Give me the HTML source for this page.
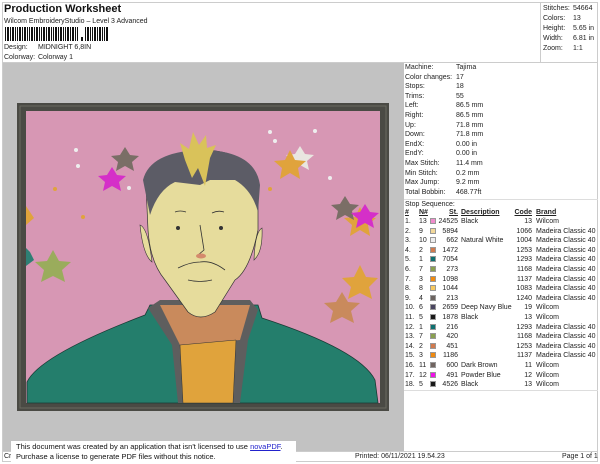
<!DOCTYPE html>
<html><head><meta charset="utf-8"><style>
*{margin:0;padding:0;box-sizing:border-box}
body{width:600px;height:464px;background:#fff;position:relative;overflow:hidden;font-family:"Liberation Sans",Arial,sans-serif;color:#222;font-size:7px}
.a{position:absolute;white-space:nowrap;line-height:9px}
.r{text-align:right}
.sw{position:absolute;width:6px;height:6px;border:1px solid #999}
</style></head><body>
<div class="a" style="left:2px;top:2px;width:596px;height:460px;border:1px solid #ccc"></div>
<div class="a" style="left:540px;top:2px;width:1px;height:60px;background:#ccc"></div>
<div class="a" style="left:2px;top:62px;width:596px;height:1px;background:#ccc"></div>
<div class="a" style="left:4px;top:3px;font-size:11px;font-weight:bold;line-height:13px;color:#111">Production Worksheet</div>
<div class="a" style="left:4px;top:17px;font-size:7px">Wilcom EmbroideryStudio – Level 3 Advanced</div>
<svg class="a" style="left:5px;top:27px" width="105" height="14">
<g fill="#111">
<rect x="0" y="0" width="1" height="14"/><rect x="2" y="0" width="2" height="14"/><rect x="5" y="0" width="1" height="14"/><rect x="7" y="0" width="2" height="14"/><rect x="10" y="0" width="1" height="14"/><rect x="12" y="0" width="1" height="14"/><rect x="14" y="0" width="2" height="14"/><rect x="17" y="0" width="1" height="14"/><rect x="19" y="0" width="2" height="14"/><rect x="22" y="0" width="1" height="14"/><rect x="24" y="0" width="1" height="14"/><rect x="26" y="0" width="2" height="14"/><rect x="29" y="0" width="1" height="14"/><rect x="31" y="0" width="2" height="14"/><rect x="34" y="0" width="1" height="14"/><rect x="36" y="0" width="1" height="14"/><rect x="38" y="0" width="2" height="14"/><rect x="41" y="0" width="1" height="14"/><rect x="43" y="0" width="2" height="14"/><rect x="46" y="0" width="1" height="14"/><rect x="48" y="0" width="1" height="14"/><rect x="50" y="0" width="2" height="14"/><rect x="53" y="0" width="1" height="14"/><rect x="55" y="0" width="2" height="14"/><rect x="58" y="0" width="1" height="14"/><rect x="60" y="0" width="1" height="14"/><rect x="62" y="0" width="2" height="14"/><rect x="65" y="0" width="1" height="14"/><rect x="67" y="0" width="2" height="14"/><rect x="70" y="0" width="1" height="14"/><rect x="72" y="0" width="1" height="14"/>
<rect x="76" y="10" width="2" height="4"/>
<rect x="80" y="0" width="1" height="14"/><rect x="82" y="0" width="2" height="14"/><rect x="85" y="0" width="1" height="14"/><rect x="87" y="0" width="1" height="14"/><rect x="89" y="0" width="2" height="14"/><rect x="92" y="0" width="1" height="14"/><rect x="94" y="0" width="2" height="14"/><rect x="97" y="0" width="1" height="14"/><rect x="99" y="0" width="1" height="14"/><rect x="101" y="0" width="2" height="14"/>
</g></svg>
<div class="a" style="left:4px;top:43px">Design:</div><div class="a" style="left:38px;top:43px">MIDNIGHT 6,8IN</div>
<div class="a" style="left:4px;top:53px">Colorway:</div><div class="a" style="left:38px;top:53px">Colorway 1</div>
<div class="a" style="left:543px;top:4px;line-height:10px">Stitches:<br>Colors:<br>Height:<br>Width:<br>Zoom:</div>
<div class="a" style="left:573px;top:4px;line-height:10px">54664<br>13<br>5.65 in<br>6.81 in<br>1:1</div>

<div class="a" style="left:3px;top:63px;width:401px;height:388px;background:#c2c2c2"></div>
<div class="a" style="left:3px;top:451px;width:594px;height:1px;background:#ccc"></div>
<div class="a" style="left:404px;top:199px;width:194px;height:1px;background:#ddd"></div>
<div class="a" style="left:404px;top:390px;width:194px;height:1px;background:#ddd"></div>

<svg class="a" style="left:0;top:0" width="400" height="450">
<rect x="17" y="103" width="372" height="308" fill="#4a4a44"/>
<rect x="20" y="106" width="366" height="302" fill="none" stroke="#6a6a60" stroke-width="1"/>
<rect x="26" y="111" width="354" height="292" fill="#d797b4"/>
<g fill="#e0a33c"><polygon points="360,207 365,217 376,218 368,225 370,236 360,230 350,236 352,225 344,218 355,217"/></g>
<polygon points="290,96 295,104 304,105 297,111 299,120 290,115 281,120 283,111 276,105 285,104" fill="#e9e6e0" transform="translate(10,50)"/>
<polygon points="290,150 295,160 306,161 298,168 300,179 290,173 280,179 282,168 274,161 285,160" fill="#e0a33c"/>
<polygon points="125,147 130,155 139,156 132,162 134,171 125,166 116,171 118,162 111,156 120,155" fill="#7a6e66"/>
<polygon points="112,167 117,175 126,176 119,182 121,191 112,186 103,191 105,182 98,176 107,175" fill="#d52fc8"/>
<polygon points="345,196 350,204 359,205 352,211 354,220 345,215 336,220 338,211 331,205 340,204" fill="#7a6e66"/>
<polygon points="365,204 370,212 379,213 372,219 374,228 365,223 356,228 358,219 351,213 360,212" fill="#d52fc8"/>
<polygon points="53,250 59,261 71,262 62,270 65,282 53,276 41,282 44,270 35,262 47,261" fill="#9aac5c"/>
<polygon points="30,252 34,260 26,266 26,248" fill="#2e7f74"/>
<polygon points="30,212 34,218 26,225 26,206" fill="#e0a33c"/>
<polygon points="360,265 366,277 378,278 369,287 372,299 360,293 348,299 351,287 342,278 354,277" fill="#e0a33c"/>
<polygon points="342,292 348,302 360,303 351,311 354,323 342,317 330,323 333,311 324,303 336,302" fill="#c98a5c"/>
<g fill="#eee"><circle cx="76" cy="150" r="2"/><circle cx="78" cy="166" r="2"/><circle cx="270" cy="132" r="2"/><circle cx="275" cy="141" r="2"/><circle cx="315" cy="131" r="2"/><circle cx="330" cy="178" r="2"/><circle cx="129" cy="188" r="2"/></g>
<g fill="#e0a33c"><circle cx="55" cy="189" r="2"/><circle cx="83" cy="217" r="2"/><circle cx="270" cy="189" r="2"/></g>
<!-- jacket -->
<path d="M27,403 L27,382 Q40,355 145,315 L150,305 L258,305 L262,318 Q360,350 375,380 L378,403 Z" fill="#247e6c" stroke="#1a3a34" stroke-width="0.8"/>
<path d="M148,308 L160,300 L250,300 L258,310 L248,340 L240,403 L178,403 L172,345 Z" fill="#5e5e5e"/>
<path d="M160,305 L250,305 L240,340 L180,345 Z" fill="#c98a5c"/>
<path d="M180,345 L236,340 L233,403 L183,403 Z" fill="#e0a33c" stroke="#333" stroke-width="0.5"/>
<!-- face -->
<path d="M146,185 Q150,155 200,150 Q250,150 258,185 L258,230 Q250,270 235,280 L215,312 Q200,322 188,312 L165,280 Q150,262 148,230 Z" fill="#e6dc9c" stroke="#333" stroke-width="0.7"/>
<path d="M140,225 Q148,228 152,262 Q143,255 140,225Z M262,228 Q255,232 254,260 Q263,252 262,228Z" fill="#e6dc9c" stroke="#333" stroke-width="0.6"/>
<path d="M143,180 Q150,152 200,150 Q255,150 260,185 L258,212 Q252,190 235,180 L210,180 L200,185 L175,182 Q158,190 150,215 Z" fill="#5c5c66"/>
<polygon points="185,160 180,143 189,149 193,132 199,145 206,135 207,148 216,145 210,158 205,186 198,168 192,178" fill="#d9c25a"/>
<g stroke="#333" stroke-width="0.8" fill="none"><path d="M175,212 Q180,210 186,212"/><path d="M212,213 Q218,210 224,212"/><path d="M200,225 L204,250 L198,255"/><path d="M178,268 Q190,262 200,262 Q212,260 225,270"/><path d="M188,280 Q200,283 212,280"/></g>
<circle cx="178" cy="228" r="2" fill="#333"/><circle cx="221" cy="228" r="2" fill="#333"/>
<ellipse cx="201" cy="256" rx="5" ry="2.5" fill="#d48a6c"/>
</svg>

<div class="a" style="left:405px;top:63px;line-height:9.6px">Machine:<br>Color changes:<br>Stops:<br>Trims:<br>Left:<br>Right:<br>Up:<br>Down:<br>EndX:<br>EndY:<br>Max Stitch:<br>Min Stitch:<br>Max Jump:<br>Total Bobbin:</div>
<div class="a" style="left:456px;top:63px;line-height:9.6px">Tajima<br>17<br>18<br>55<br>86.5 mm<br>86.5 mm<br>71.8 mm<br>71.8 mm<br>0.00 in<br>0.00 in<br>11.4 mm<br>0.2 mm<br>9.2 mm<br>468.77ft</div>
<div class="a" style="left:405px;top:200px">Stop Sequence:</div>
<div class="a" style="left:405px;top:208px;font-weight:bold;text-decoration:underline">#</div>
<div class="a" style="left:419px;top:208px;font-weight:bold;text-decoration:underline">N#</div>
<div class="a r" style="left:430px;width:28px;top:208px;font-weight:bold;text-decoration:underline">St.</div>
<div class="a" style="left:461px;top:208px;font-weight:bold;text-decoration:underline">Description</div>
<div class="a r" style="left:505px;width:27px;top:208px;font-weight:bold;text-decoration:underline">Code</div>
<div class="a" style="left:536px;top:208px;font-weight:bold;text-decoration:underline">Brand</div>
<div class="a" style="left:405px;top:217px;line-height:9.6px">1.<br>2.<br>3.<br>4.<br>5.<br>6.<br>7.<br>8.<br>9.<br>10.<br>11.<br>12.<br>13.<br>14.<br>15.<br>16.<br>17.<br>18.</div>
<div class="a" style="left:419px;top:217px;line-height:9.6px">13<br>9<br>10<br>2<br>1<br>7<br>3<br>8<br>4<br>6<br>5<br>1<br>7<br>2<br>3<br>11<br>12<br>5</div>
<div class="a r" style="left:430px;width:28px;top:217px;line-height:9.6px">24525<br>5894<br>662<br>1472<br>7054<br>273<br>1098<br>1044<br>213<br>2659<br>1878<br>216<br>420<br>451<br>1186<br>600<br>491<br>4526</div>
<div class="a" style="left:461px;top:217px;line-height:9.6px">Black<br><br>Natural White<br><br><br><br><br><br><br>Deep Navy Blue<br>Black<br><br><br><br><br>Dark Brown<br>Powder Blue<br>Black</div>
<div class="a r" style="left:505px;width:27px;top:217px;line-height:9.6px">13<br>1066<br>1004<br>1253<br>1293<br>1168<br>1137<br>1083<br>1240<br>19<br>13<br>1293<br>1168<br>1253<br>1137<br>11<br>12<br>13</div>
<div class="a" style="left:536px;top:217px;line-height:9.6px">Wilcom<br>Madeira Classic 40<br>Madeira Classic 40<br>Madeira Classic 40<br>Madeira Classic 40<br>Madeira Classic 40<br>Madeira Classic 40<br>Madeira Classic 40<br>Madeira Classic 40<br>Wilcom<br>Wilcom<br>Madeira Classic 40<br>Madeira Classic 40<br>Madeira Classic 40<br>Madeira Classic 40<br>Wilcom<br>Wilcom<br>Wilcom</div>
<div class="sw" style="left:430px;top:218px;background:#f08ccc"></div>
<div class="sw" style="left:430px;top:227.6px;background:#f2d89a"></div>
<div class="sw" style="left:430px;top:237.2px;background:#eeeeee"></div>
<div class="sw" style="left:430px;top:246.8px;background:#d07a4e"></div>
<div class="sw" style="left:430px;top:256.4px;background:#0e7070"></div>
<div class="sw" style="left:430px;top:266px;background:#8aa050"></div>
<div class="sw" style="left:430px;top:275.6px;background:#f08a10"></div>
<div class="sw" style="left:430px;top:285.2px;background:#f6c860"></div>
<div class="sw" style="left:430px;top:294.8px;background:#6c6460"></div>
<div class="sw" style="left:430px;top:304.4px;background:#4a4660"></div>
<div class="sw" style="left:430px;top:314px;background:#181818"></div>
<div class="sw" style="left:430px;top:323.6px;background:#0e7070"></div>
<div class="sw" style="left:430px;top:333.2px;background:#8aa050"></div>
<div class="sw" style="left:430px;top:342.8px;background:#d07a4e"></div>
<div class="sw" style="left:430px;top:352.4px;background:#f08a10"></div>
<div class="sw" style="left:430px;top:362px;background:#706460"></div>
<div class="sw" style="left:430px;top:371.6px;background:#f010e8"></div>
<div class="sw" style="left:430px;top:381.2px;background:#181818"></div>

<div class="a" style="left:4px;top:452px">Cr</div>
<div class="a" style="left:355px;top:452px">Printed: 06/11/2021 19.54.23</div>
<div class="a" style="left:562px;top:452px">Page 1 of 1</div>
<div class="a" style="left:11px;top:441px;width:285px;height:23px;background:#fff"></div>
<div class="a" style="left:16px;top:442px;font-size:7.5px;line-height:10px;color:#111">This document was created by an application that isn't licensed to use <span style="color:#22c;text-decoration:underline">novaPDF</span>.<br>Purchase a license to generate PDF files without this notice.</div>
</body></html>
